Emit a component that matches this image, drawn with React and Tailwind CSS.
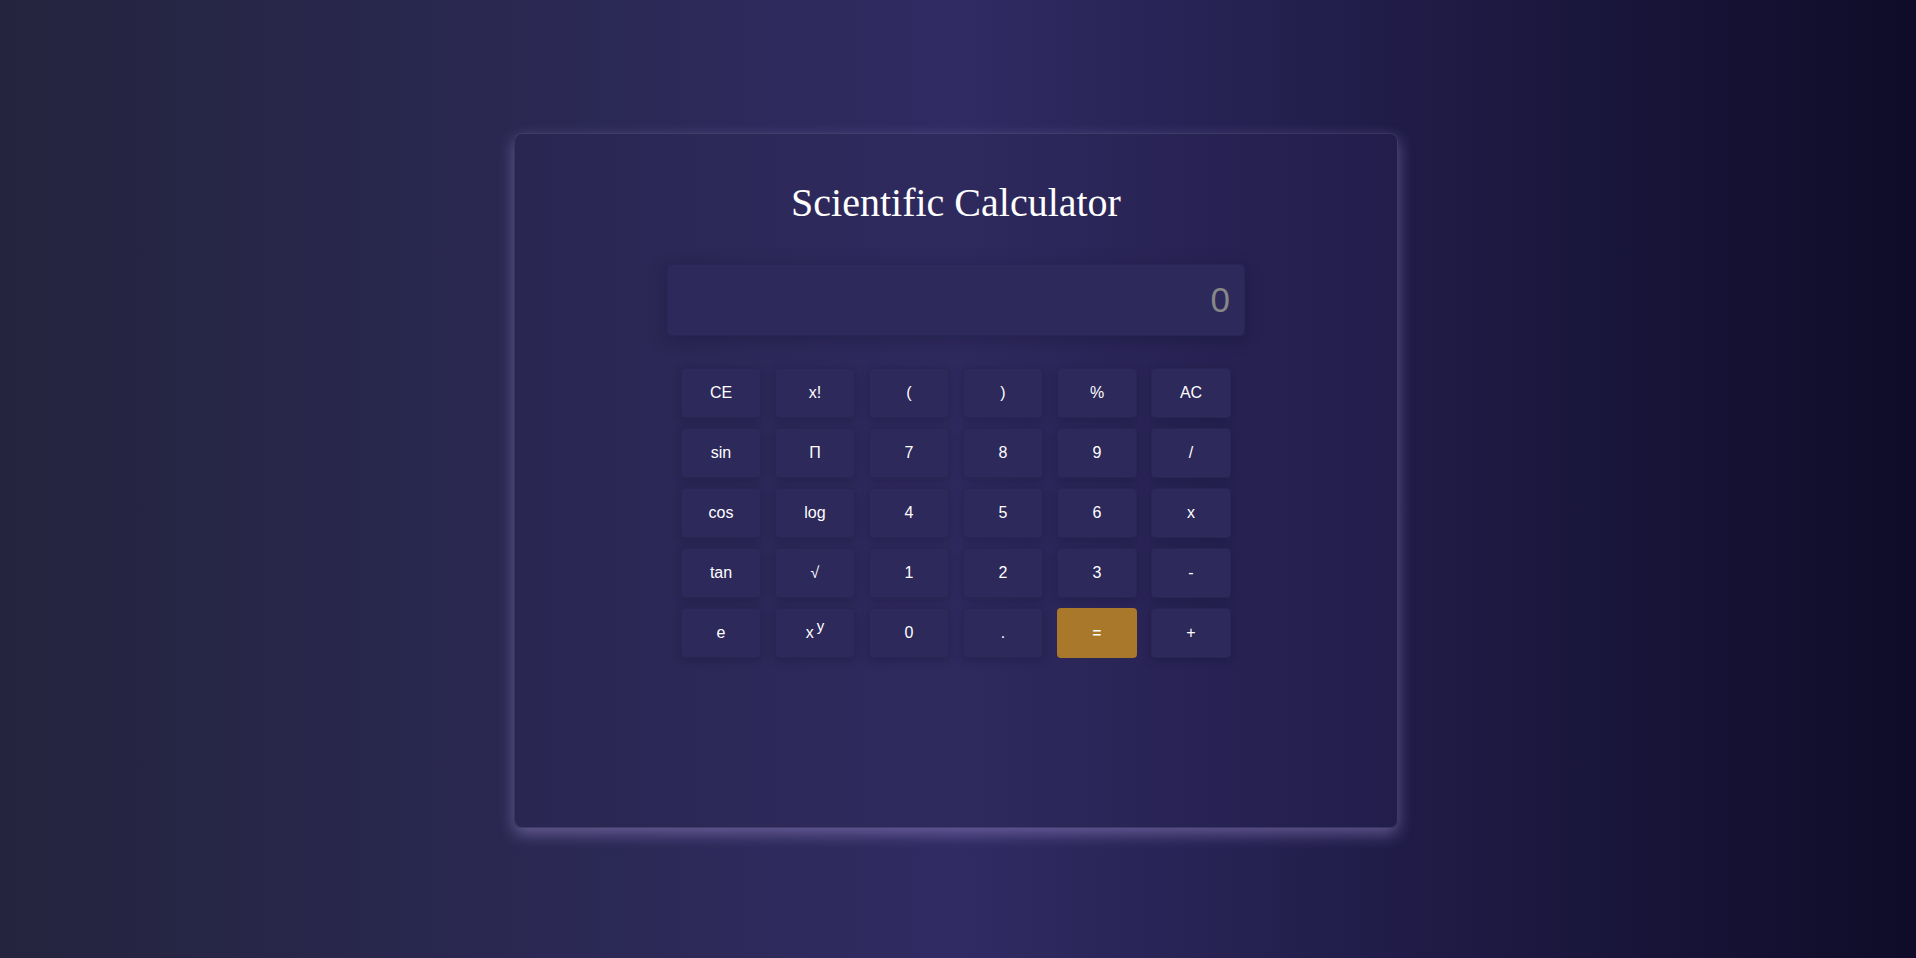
import React, { useState } from 'react';

const keys = [
    ['CE', 'x!', '(', ')', '%', 'AC'],
    ['sin', 'Π', '7', '8', '9', '/'],
    ['cos', 'log', '4', '5', '6', 'x'],
    ['tan', '√', '1', '2', '3', '-'],
    ['e', 'xy', '0', '.', '=', '+'],
];

function Key({ label, onPress }) {
    const isEquals = label === '=';
    return (
        <button
            onClick={() => onPress(label)}
            className={`h-[50px] w-[80px] rounded-[4px] flex items-center justify-center text-white font-['Liberation_Sans',Arial,sans-serif] ${
                isEquals
                    ? 'bg-[#a9782b] font-bold text-[15px]'
                    : 'text-[16px] bg-[#2d295b] border border-[#2a2654] shadow-[0_2px_10px_rgba(10,8,30,0.25)]'
            }`}
        >
            {label === 'xy' ? (
                <span>
                    x<sup className="ml-[3px] text-[15px]">y</sup>
                </span>
            ) : (
                label
            )}
        </button>
    );
}

export default function App() {
    const [value, setValue] = useState('');

    const press = (k) => {
        if (k === 'AC') return setValue('');
        if (k === 'CE') return setValue((v) => v.slice(0, -1));
        if (k === '=') return;
        setValue((v) => v + k);
    };

    return (
        <div className="min-h-[958px] w-full bg-linear-to-r from-[#24243e] via-[#302b63] to-[#0f0c29] flex justify-center pr-1 pt-[133px]">
            <div className="w-[884px] h-[695px] rounded-lg border border-white/10 bg-linear-to-r from-[#2a2652] via-[#2f2a5e] to-[#221d4b] shadow-[0_6px_16px_rgba(190,170,240,0.4)] flex flex-col items-center">
                <h1 className="pt-[46px] text-[40px] leading-[46px] text-white font-['Liberation_Serif','Times_New_Roman',serif]">
                    Scientific Calculator
                </h1>
                <div className="mt-[38px] w-[578px] h-[72px] rounded-[5px] bg-[#2d295b] border border-[#2a2654] shadow-[0_4px_18px_rgba(10,8,30,0.25)] flex items-center justify-end pr-[14px]">
                    <span className="text-[35px] text-[#878787] font-['Liberation_Sans',Arial,sans-serif]">
                        {value || '0'}
                    </span>
                </div>
                <div className="mt-8 grid grid-cols-[repeat(6,80px)] gap-x-[14px] gap-y-[10px]">
                    {keys.flat().map((k) => (
                        <Key key={k} label={k} onPress={press} />
                    ))}
                </div>
            </div>
        </div>
    );
}
